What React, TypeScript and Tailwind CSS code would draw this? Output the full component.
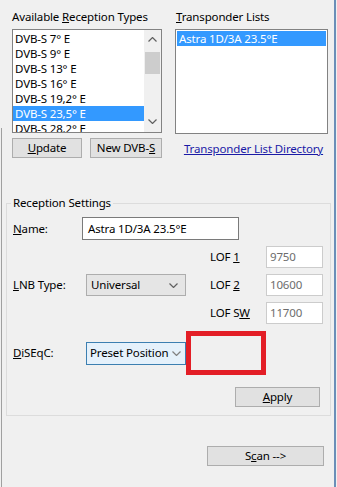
import React from 'react';

const FONT = "font-['Noto_Sans',sans-serif]";

function Chevron({ up = false, color = '#606060' }: { up?: boolean; color?: string }) {
    return (
        <svg width="9" height="5" viewBox="0 0 9 5" className="block shrink-0">
            <polyline
                points={up ? '0.5,4.5 4.5,0.5 8.5,4.5' : '0.5,0.5 4.5,4.5 8.5,0.5'}
                fill="none"
                stroke={color}
                strokeWidth="1.2"
            />
        </svg>
    );
}

function Btn({ children, className = '' }: { children: React.ReactNode; className?: string }) {
    return (
        <div className={`h-[20px] bg-[#e1e1e1] border border-[#adadad] flex items-center justify-center leading-none ${className}`}>
            {children}
        </div>
    );
}

const types = ['DVB-S 7° E', 'DVB-S 9° E', 'DVB-S 13° E', 'DVB-S 16° E', 'DVB-S 19,2° E', 'DVB-S 23,5° E', 'DVB-S 28,2° E'];

export default function App() {
    return (
        <div className={`${FONT} text-[11.5px] tracking-[-0.15px] text-black w-[337px] h-[487px] bg-[#f0f0f0] flex overflow-hidden relative`}>
            {/* window frame on the left */}
            <div className="absolute left-[1px] top-[128px] bottom-0 w-px bg-[#a0a0a0]" />

            <div className="w-[334px] flex flex-col">
                {/* Top: lists */}
                <div className="flex pt-[9px] pl-[12px] gap-[13px]">
                    <div className="w-[150px] flex flex-col">
                        <div className="h-[16px] leading-[16px]">Available <u>R</u>eception Types</div>
                        <div className="mt-[4px] h-[104px] border border-[#828282] bg-white flex overflow-hidden">
                            <div className="flex-1 pt-[1px] overflow-hidden">
                                {types.map((t) => (
                                    <div
                                        key={t}
                                        className={`h-[15px] leading-[15px] pl-[2px] whitespace-nowrap ${t === 'DVB-S 23,5° E' ? 'bg-[#3399ff] text-white' : ''}`}
                                    >
                                        {t}
                                    </div>
                                ))}
                            </div>
                            <div className="w-[17px] bg-[#f0f0f0] flex flex-col">
                                <div className="h-[17px] flex items-center justify-center pt-[2px]"><Chevron up /></div>
                                <div className="flex-1">
                                    <div className="mt-[5px] mx-[1px] h-[22px] bg-[#cdcdcd]" />
                                </div>
                                <div className="h-[17px] flex items-center justify-center pb-[4px]"><Chevron /></div>
                            </div>
                        </div>
                        <div className="mt-[5px] flex gap-[8px]">
                            <Btn className="w-[70px]"><u>U</u>pdate</Btn>
                            <Btn className="w-[72px]">New DVB-<u>S</u></Btn>
                        </div>
                    </div>

                    <div className="w-[153px] flex flex-col">
                        <div className="h-[16px] leading-[16px] pl-[1px]"><u>T</u>ransponder Lists</div>
                        <div className="mt-[4px] h-[105px] border border-[#828282] bg-white pt-[1px] px-[1px]">
                            <div className="h-[15px] leading-[15px] pl-[2px] bg-[#3399ff] text-white whitespace-nowrap">Astra 1D/3A 23.5°E</div>
                        </div>
                        <div className="mt-[7px] h-[16px] leading-[16px] text-center pl-[4px] text-[#1a1aa6] underline whitespace-nowrap">
                            Transponder List Directory
                        </div>
                    </div>
                </div>

                {/* Reception settings group */}
                <fieldset className="mt-[37px] ml-[6px] w-[325px] border border-[#dcdcdc] pb-[8px]">
                    <legend className="ml-[4px] px-[2px] h-[16px] leading-[16px]">Reception Settings</legend>

                    <div className="pt-[6px] pl-[6px] flex items-center">
                        <div className="w-[69px]"><u>N</u>ame:</div>
                        <div className="w-[157px] h-[23px] bg-white border border-[#7a7a7a] flex items-center pl-[5px] whitespace-nowrap">
                            Astra 1D/3A 23.5°E
                        </div>
                    </div>

                    <div className="mt-[6px] pl-[6px] grid grid-cols-[73px_100px_24px_56px_57px] grid-rows-[22px_22px_22px] gap-y-[6px] items-center">
                        <div className="col-start-4 row-start-1">LOF <u>1</u></div>
                        <div className="col-start-5 row-start-1 h-[22px] bg-white border border-[#cccccc] text-[#6d6d6d] flex items-center pl-[3px]">9750</div>

                        <div className="col-start-1 row-start-2"><u>L</u>NB Type:</div>
                        <div className="col-start-2 row-start-2 h-[22px] bg-[#e5e5e5] border border-[#adadad] flex items-center justify-between pl-[4px] pr-[7px]">
                            <span>Universal</span>
                            <Chevron />
                        </div>
                        <div className="col-start-4 row-start-2">LOF <u>2</u></div>
                        <div className="col-start-5 row-start-2 h-[22px] bg-white border border-[#cccccc] text-[#6d6d6d] flex items-center pl-[3px]">10600</div>

                        <div className="col-start-4 row-start-3">LOF S<u>W</u></div>
                        <div className="col-start-5 row-start-3 h-[22px] bg-white border border-[#cccccc] text-[#6d6d6d] flex items-center pl-[3px]">11700</div>
                    </div>

                    <div className="mt-[7px] pl-[6px] flex items-center">
                        <div className="w-[73px]"><u>D</u>iSEqC:</div>
                        <div className="w-[100px] h-[23px] bg-[#e5f1fb] border border-[#3c7fb1] flex items-center justify-between pl-[3px] pr-[4px] whitespace-nowrap">
                            <span>Preset Position</span>
                            <Chevron color="#808080" />
                        </div>
                        <div className="w-[80px] h-[44px] border-[5px] border-[#e31e26]" />
                    </div>

                    <div className="mt-[12px] flex justify-end pr-[10px]">
                        <Btn className="w-[85px]"><u>A</u>pply</Btn>
                    </div>
                </fieldset>

                <div className="mt-[30px] flex justify-end pr-[10px]">
                    <Btn className="w-[117px]">S<u>c</u>an --&gt;</Btn>
                </div>
            </div>

            {/* right window edge */}
            <div className="w-[2px] h-full bg-[#6b8fb8]" />
        </div>
    );
}
